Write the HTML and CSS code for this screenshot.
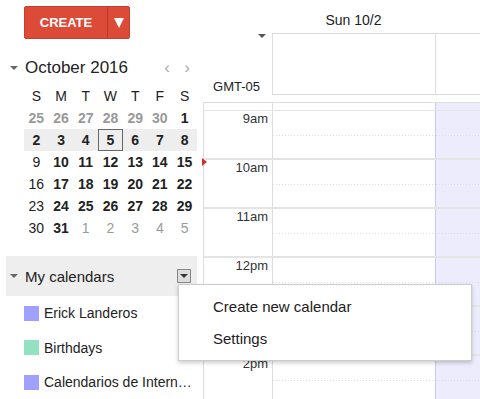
FILE: index.html
```html
<!DOCTYPE html>
<html lang="en">
<head>
    <meta charset="UTF-8">
    <title>Calendar</title>
    <link rel="stylesheet" href="styles.css">
</head>
<body>
    <div class="app">
        <aside class="sidebar">
            <div class="create">
                <span class="create-label">CREATE</span>
                <span class="create-drop"></span>
            </div>

            <div class="month-row">
                <span class="tri"></span>
                <span class="month-title">October 2016</span>
                <span class="nav">&lsaquo;</span>
                <span class="nav">&rsaquo;</span>
            </div>

            <table class="mini">
                <tr class="dow"><td>S</td><td>M</td><td>T</td><td>W</td><td>T</td><td>F</td><td>S</td></tr>
                <tr><td class="off b">25</td><td class="off b">26</td><td class="off b">27</td><td class="off b">28</td><td class="off b">29</td><td class="off b">30</td><td class="b">1</td></tr>
                <tr class="week"><td class="b">2</td><td class="b">3</td><td class="b">4</td><td class="b today"><span>5</span></td><td class="b">6</td><td class="b">7</td><td class="b">8</td></tr>
                <tr><td>9</td><td class="b">10</td><td class="b">11</td><td class="b">12</td><td class="b">13</td><td class="b">14</td><td class="b">15</td></tr>
                <tr><td>16</td><td class="b">17</td><td class="b">18</td><td class="b">19</td><td class="b">20</td><td class="b">21</td><td class="b">22</td></tr>
                <tr><td>23</td><td class="b">24</td><td class="b">25</td><td class="b">26</td><td class="b">27</td><td class="b">28</td><td class="b">29</td></tr>
                <tr><td>30</td><td class="b">31</td><td class="off">1</td><td class="off">2</td><td class="off">3</td><td class="off">4</td><td class="off">5</td></tr>
            </table>

            <div class="cal-head">
                <span class="tri"></span>
                <span class="cal-title">My calendars</span>
                <span class="cal-btn"></span>
            </div>
            <ul class="cal-list">
                <li><span class="swatch blue"></span>Erick Landeros</li>
                <li><span class="swatch green"></span>Birthdays</li>
                <li><span class="swatch blue"></span>Calendarios de Intern&hellip;</li>
            </ul>
        </aside>

        <main class="main">
            <div class="day-head">
                <div class="gutter"></div>
                <div class="day-name">Sun 10/2</div>
            </div>
            <div class="allday">
                <div class="gutter">
                    <span class="tz-tri"></span>
                    <span class="tz">GMT-05</span>
                </div>
                <div class="allday-col"></div>
                <div class="allday-col next"></div>
            </div>
            <div class="grid">
                <div class="grid-top">
                    <div class="gutter"></div>
                    <div class="col"></div>
                    <div class="col next"></div>
                </div>
                <div class="hour">
                    <div class="gutter">9am</div>
                    <div class="col"></div>
                    <div class="col next"></div>
                </div>
                <div class="hour">
                    <div class="gutter">10am</div>
                    <div class="col"></div>
                    <div class="col next"></div>
                </div>
                <div class="hour">
                    <div class="gutter">11am</div>
                    <div class="col"></div>
                    <div class="col next"></div>
                </div>
                <div class="hour">
                    <div class="gutter">12pm</div>
                    <div class="col"></div>
                    <div class="col next"></div>
                </div>
                <div class="hour">
                    <div class="gutter"></div>
                    <div class="col"></div>
                    <div class="col next"></div>
                </div>
                <div class="hour">
                    <div class="gutter">2pm</div>
                    <div class="col"></div>
                    <div class="col next"></div>
                </div>
            </div>
        </main>
    </div>

    <!-- current time marker and the open calendars menu -->
    <span class="now-marker"></span>
    <div class="menu">
        <div class="menu-item">Create new calendar</div>
        <div class="menu-item">Settings</div>
    </div>
</body>
</html>
```

FILE: styles.css
```css
body {
    margin: 0;
    font-family: 'Liberation Sans', Arial, sans-serif;
    color: #222;
    background: #fff;
    width: 480px;
    height: 399px;
    overflow: hidden;
    position: relative;
}

.app {
    display: flex;
    height: 399px;
}

/* sidebar */

.sidebar {
    width: 203px;
    flex-shrink: 0;
}

.create {
    display: flex;
    margin: 6px 0 0 24px;
    width: 106px;
    height: 33px;
    background: #dc4a38;
    border: 1px solid #c6402f;
    border-radius: 2px;
    box-sizing: border-box;
    color: #fff;
}

.create-label {
    width: 82px;
    display: flex;
    align-items: center;
    justify-content: center;
    font-size: 13px;
    font-weight: bold;
    border-right: 1px solid #b73a2b;
}

.create-drop {
    flex: 1;
    display: flex;
    align-items: center;
    justify-content: center;
}

.create-drop::before {
    content: '';
    border-left: 5px solid transparent;
    border-right: 5px solid transparent;
    border-top: 10px solid #fff;
}

.tri {
    width: 0;
    height: 0;
    border-left: 4px solid transparent;
    border-right: 4px solid transparent;
    border-top: 4px solid #666;
    margin: 0 7px 0 10px;
}

.month-row {
    display: flex;
    align-items: center;
    height: 22px;
    margin-top: 18px;
}

.month-title {
    font-size: 17px;
    flex: 1;
}

.nav {
    width: 20px;
    text-align: center;
    color: #aaa;
    font-size: 17px;
}

.nav:last-child {
    margin-right: 6px;
}

.mini {
    margin: 6px 0 0 24px;
    width: 173px;
    border-collapse: collapse;
    table-layout: fixed;
}

.mini td {
    height: 22px;
    padding: 0;
    text-align: center;
    font-size: 14px;
}

.mini .b {
    font-weight: bold;
}

.mini .off {
    color: #999;
}

.mini .week td {
    background: #eee;
}

.mini .today span {
    display: block;
    height: 20px;
    line-height: 20px;
    border: 1px solid #666;
}

.cal-head {
    display: flex;
    align-items: center;
    margin: 17px 0 0 6px;
    width: 191px;
    height: 40px;
    background: #eee;
}

.cal-head .tri {
    margin-left: 4px;
}

.cal-title {
    font-size: 15px;
    flex: 1;
}

.cal-btn {
    width: 14px;
    height: 14px;
    border: 1px solid #888;
    background: #ddd;
    box-sizing: border-box;
    margin-right: 6px;
    display: flex;
    align-items: center;
    justify-content: center;
}

.cal-btn::before {
    content: '';
    border-left: 4px solid transparent;
    border-right: 4px solid transparent;
    border-top: 4px solid #333;
}

.cal-list {
    list-style: none;
    margin: 0;
    padding: 0;
}

.cal-list li {
    display: flex;
    align-items: center;
    height: 34.5px;
    padding-left: 24px;
    font-size: 14px;
    white-space: nowrap;
}

.swatch {
    width: 15px;
    height: 15px;
    margin-right: 5px;
}

.swatch.blue {
    background: #9fa0ff;
}

.swatch.green {
    background: #92e1c0;
}

/* day view */

.main {
    flex: 1;
    min-width: 0;
}

.main .gutter {
    width: 69px;
    flex-shrink: 0;
}

.day-head {
    display: flex;
    height: 33px;
}

.day-name {
    width: 163px;
    text-align: center;
    font-size: 14px;
    line-height: 40px;
}

.allday {
    display: flex;
    height: 62px;
}

.allday .gutter {
    display: flex;
    flex-direction: column;
    align-items: flex-end;
    justify-content: space-between;
    padding-right: 6px;
    box-sizing: border-box;
}

.tz-tri {
    width: 0;
    height: 0;
    border-left: 4px solid transparent;
    border-right: 4px solid transparent;
    border-top: 4px solid #555;
    margin-top: 1px;
}

.tz {
    font-size: 13px;
    margin-bottom: 1px;
    margin-right: 6px;
}

.allday-col {
    width: 163px;
    border: 1px solid #ddd;
    border-right: none;
    box-sizing: border-box;
}

.allday-col.next {
    flex: 1;
    width: auto;
}

.grid {
    margin-top: 7px;
    border-left: 1px solid #ddd;
    border-top: 1px solid #ddd;
}

.grid .gutter {
    width: 68px;
}

.grid-top,
.hour {
    display: flex;
    border-bottom: 2px solid #e4e4e4;
    box-sizing: border-box;
}

.grid-top {
    height: 8px;
    border-bottom-width: 1px;
}

.hour {
    height: 49px;
}

.hour .gutter {
    text-align: right;
    padding-right: 4px;
    box-sizing: border-box;
    font-size: 13px;
    color: #333;
}

.col {
    width: 163px;
    border-left: 1px solid #ddd;
    box-sizing: border-box;
}

.col.next {
    flex: 1;
    width: auto;
    background: #ececfd;
    border-left-color: #c8c8f2;
}

.hour .col {
    background-image: linear-gradient(to right, #ddd 50%, transparent 50%);
    background-size: 3px 1px;
    background-repeat: repeat-x;
    background-position: 0 24px;
}

.hour .col.next {
    background-color: #ececfd;
}

/* overlays */

.now-marker {
    position: absolute;
    left: 202px;
    top: 158px;
    width: 0;
    height: 0;
    border-top: 4px solid transparent;
    border-bottom: 4px solid transparent;
    border-left: 5px solid #d32f2f;
}

.menu {
    position: absolute;
    left: 178px;
    top: 284px;
    width: 294px;
    height: 77px;
    box-sizing: border-box;
    background: #fff;
    border: 1px solid #ccc;
    box-shadow: 0 2px 4px rgba(0, 0, 0, 0.2);
    padding-top: 6px;
}

.menu-item {
    height: 32px;
    line-height: 32px;
    padding-left: 34px;
    font-size: 15px;
}
```
